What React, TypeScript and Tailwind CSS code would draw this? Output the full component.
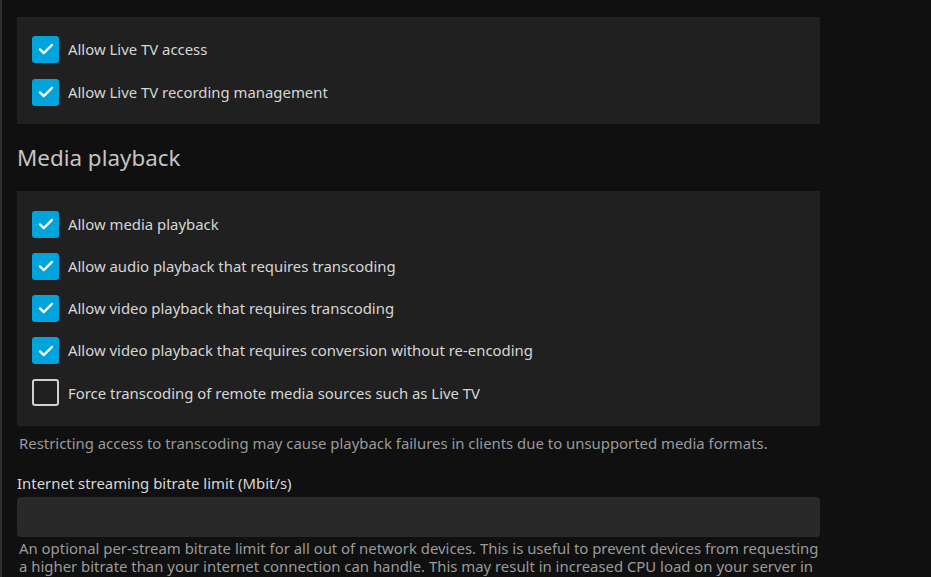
import React from "react";

type Opt = { label: string; checked: boolean };

const liveTv: Opt[] = [
  { label: "Allow Live TV access", checked: true },
  { label: "Allow Live TV recording management", checked: true },
];

const playback: Opt[] = [
  { label: "Allow media playback", checked: true },
  { label: "Allow audio playback that requires transcoding", checked: true },
  { label: "Allow video playback that requires transcoding", checked: true },
  { label: "Allow video playback that requires conversion without re-encoding", checked: true },
  { label: "Force transcoding of remote media sources such as Live TV", checked: false },
];

export default function App() {
  return (
    <div
      className="h-[577px] w-[931px] overflow-hidden bg-[#101010] border-l-2 border-[#2e2e2e] text-[14.9px]"
      style={{ fontFamily: '"Noto Sans", sans-serif' }}
    >
      <div className="w-[803px] ml-[15px] pt-[17px]">
        <Panel items={liveTv} className="py-[10.5px]" rowClass="h-[43px]" />

        <h2 className="mt-[17px] h-[34px] leading-[34px] text-[22.4px] text-[#c4c4c4]">Media playback</h2>

        <Panel items={playback} className="mt-[16px] py-[12px]" rowClass="h-[42.2px]" />

        <p className="mt-[7px] px-[2px] leading-[20px] text-[14.9px] text-[#9a9a9a]">
          Restricting access to transcoding may cause playback failures in clients due to unsupported media formats.
        </p>

        <label className="block mt-[20px] leading-[20px] text-[#d8d8d8]">
          Internet streaming bitrate limit (Mbit/s)
        </label>
        <input
          type="text"
          className="mt-[4px] block h-[40px] w-full rounded-[4px] bg-[#292929] outline-none"
        />
        <p className="mt-[2px] px-[2px] leading-[18.5px] text-[14.9px] text-[#9a9a9a] whitespace-nowrap">
          An optional per-stream bitrate limit for all out of network devices. This is useful to prevent devices from requesting
          <br />
          a higher bitrate than your internet connection can handle. This may result in increased CPU load on your server in
          <br />
          order to transcode videos on the fly to a lower bitrate.
        </p>
      </div>
    </div>
  );
}

function Panel({ items, className, rowClass }: { items: Opt[]; className?: string; rowClass: string }) {
  return (
    <div className={`bg-[#202020] px-[15px] ${className ?? ""}`}>
      {items.map((o) => (
        <div key={o.label} className={`flex items-center ${rowClass}`}>
          <Check checked={o.checked} />
          <span className="ml-[9px] text-[#d6d6d6]">{o.label}</span>
        </div>
      ))}
    </div>
  );
}

function Check({ checked }: { checked: boolean }) {
  if (!checked) {
    return <span className="block h-[27px] w-[27px] rounded-[3px] border-2 border-[#d0d0d0]" />;
  }
  return (
    <span className="flex h-[27px] w-[27px] items-center justify-center rounded-[3px] bg-[#00a4dc]">
      <svg width="18" height="18" viewBox="0 0 24 24" fill="none">
        <path d="M4 12.5l5 5L20 6.5" stroke="#fff" strokeWidth="3" strokeLinecap="round" strokeLinejoin="round" />
      </svg>
    </span>
  );
}
